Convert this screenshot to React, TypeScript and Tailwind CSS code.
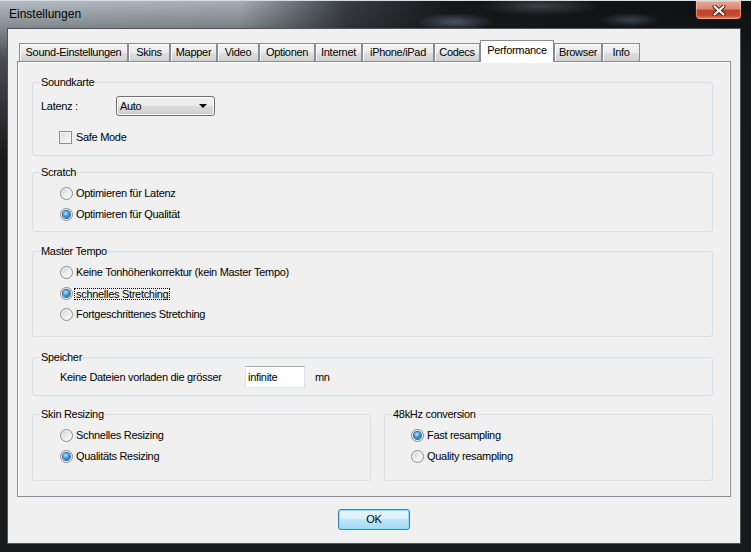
import React from "react";

const tabs = [
  { name: "Sound-Einstellungen", w: "w-[109px]" },
  { name: "Skins", w: "w-[42px]" },
  { name: "Mapper", w: "w-[47px]" },
  { name: "Video", w: "w-[42px]" },
  { name: "Optionen", w: "w-[56px]" },
  { name: "Internet", w: "w-[47px]" },
  { name: "iPhone/iPad", w: "w-[72px]" },
  { name: "Codecs", w: "w-[46px]" },
  { name: "Performance", w: "w-[74px]", active: true },
  { name: "Browser", w: "w-[48px]" },
  { name: "Info", w: "w-[38px]" },
];

function Radio({ checked }: { checked?: boolean }) {
  return (
    <span className="flex h-[13px] w-[13px] shrink-0 items-center justify-center rounded-full border border-[#8a8c8e] bg-[linear-gradient(135deg,#cfd0d1,#f6f6f6_70%)] shadow-[inset_0_0_0_1px_#f4f4f4]">
      {checked && (
        <span className="h-[7px] w-[7px] rounded-full bg-[radial-gradient(circle_at_40%_35%,#bfe6fb,#3b98dc_45%,#0b4c8e)] shadow-[0_0_0_1px_#2b6a9e]" />
      )}
    </span>
  );
}

function Option({ label, checked, focused }: { label: string; checked?: boolean; focused?: boolean }) {
  return (
    <div className="flex h-[21px] items-center gap-[3px]">
      <Radio checked={checked} />
      {focused ? (
        <span className="-ml-[2px] border border-dotted border-black px-[1px] leading-[10px]">{label}</span>
      ) : (
        <span>{label}</span>
      )}
    </div>
  );
}

function Group({ title, className, children }: { title: string; className: string; children: React.ReactNode }) {
  return (
    <fieldset className={`rounded-[3px] border border-[#d5dfe5] ${className}`}>
      <legend className="ml-[7px] px-[1px] leading-[13px]">{title}</legend>
      {children}
    </fieldset>
  );
}

export default function App() {
  return (
    <div className="flex h-[552px] w-[751px] flex-col overflow-hidden bg-[linear-gradient(to_bottom,transparent_0,rgba(24,26,29,0.7)_60px,#17191c_160px),radial-gradient(ellipse_38px_9px_at_455px_22px,rgba(150,170,200,0.55),transparent),radial-gradient(ellipse_30px_7px_at_630px_20px,rgba(120,150,190,0.45),transparent),radial-gradient(ellipse_60px_10px_at_540px_6px,rgba(200,205,215,0.25),transparent),linear-gradient(to_right,#b6bfc6_0%,#a7b0b7_32%,#3a3e43_46%,#141619_60%,#0e0f11_100%)] font-['Liberation_Sans',Arial,sans-serif] text-[11px] tracking-[-0.3px] text-black">
      {/* title bar */}
      <div className="flex h-[29px] shrink-0 items-start justify-between border-t border-[#d8dde2]">
        <div className="pl-[9px] pt-[6px] text-[12px] leading-[15px] tracking-normal text-black">Einstellungen</div>
        <div className="mr-[9px] flex h-[19px] w-[47px] items-center justify-center rounded-b-[5px] border border-t-0 border-[#3a0e08] bg-[linear-gradient(#eaa999,#d98672_45%,#c2412a_50%,#c64a31_80%,#e27e5d)] shadow-[inset_0_0_0_1px_rgba(255,220,210,0.45)]">
          <svg width="14" height="11" viewBox="0 0 14 11">
            <path d="M2.5 1.5 L11.5 9.5 M11.5 1.5 L2.5 9.5" stroke="#4a1a12" strokeWidth="4" strokeLinecap="round" />
            <path d="M2.5 1.5 L11.5 9.5 M11.5 1.5 L2.5 9.5" stroke="#ffffff" strokeWidth="2.2" strokeLinecap="round" />
          </svg>
        </div>
      </div>

      {/* client area */}
      <div className="mb-[9px] ml-[8px] mr-[11px] flex flex-1 flex-col bg-[#f0f0f0] pt-[11px] shadow-[0_0_0_1px_#4d5359]">
        {/* tab strip */}
        <div className="ml-[11px] flex h-[21px] items-end">
          {tabs.map((t) =>
            t.active ? (
              <div
                key={t.name}
                className={`relative z-10 -mb-px flex h-[22px] ${t.w} items-center justify-center border border-b-0 border-[#898c95] bg-white pb-[3px]`}
              >
                {t.name}
              </div>
            ) : (
              <div
                key={t.name}
                className={`flex h-[18px] ${t.w} items-center justify-center border border-b-0 border-[#898c95] bg-[linear-gradient(#f3f3f3,#ebebeb_50%,#dedede_50%,#d2d2d2)] shadow-[inset_1px_1px_0_#fbfbfb]`}
              >
                {t.name}
              </div>
            )
          )}
        </div>

        {/* tab panel */}
        <div className="ml-[9px] h-[436px] w-[714px] border border-[#898c95] bg-[#f0f0f0] px-[14px] pt-[14px] shadow-[inset_1px_1px_0_#fff,inset_-1px_0_0_#fff]">
          <Group title="Soundkarte" className="h-[80px] w-[681px]">
            <div className="flex items-center pl-[8px] pt-[7px]">
              <span className="w-[75px]">Latenz :</span>
              <div className="flex h-[20px] w-[99px] items-center justify-between rounded-[3px] border border-[#707070] bg-[linear-gradient(#f2f2f2,#ebebeb_50%,#dddddd_50%,#cfcfcf)] pl-[3px] pr-[7px] shadow-[inset_0_0_0_1px_#fafafa]">
                <span>Auto</span>
                <svg width="8" height="4" viewBox="0 0 8 4">
                  <path d="M0 0h8l-4 4z" fill="#000" />
                </svg>
              </div>
            </div>
            <div className="mt-[14px] flex h-[14px] items-center gap-[4px] pl-[26px]">
              <span className="h-[13px] w-[13px] shrink-0 border border-[#8e8f8f] bg-[linear-gradient(135deg,#dcdcdc,#fbfbfb)] shadow-[inset_0_0_0_1px_#f4f4f4]" />
              <span>Safe Mode</span>
            </div>
          </Group>

          <Group title="Scratch" className="mt-[10px] h-[66px] w-[681px]">
            <div className="pl-[27px] pt-[4px]">
              <Option label="Optimieren für Latenz" />
              <Option label="Optimieren für Qualität" checked />
            </div>
          </Group>

          <Group title="Master Tempo" className="mt-[13px] h-[92px] w-[681px]">
            <div className="pl-[27px] pt-[4px]">
              <Option label="Keine Tonhöhenkorrektur (kein Master Tempo)" />
              <Option label="schnelles Stretching" checked focused />
              <Option label="Fortgeschrittenes Stretching" />
            </div>
          </Group>

          <Group title="Speicher" className="mt-[14px] h-[45px] w-[681px]">
            <div className="flex items-center pl-[27px] pt-[2px]">
              <span className="w-[185px]">Keine Dateien vorladen die grösser</span>
              <div className="flex h-[22px] w-[60px] items-center border border-[#abadb3] border-b-[#e3e9ef] border-l-[#e2e3ea] border-r-[#dbdfe6] bg-white pl-[2px]">
                infinite
              </div>
              <span className="ml-[10px]">mn</span>
            </div>
          </Group>

          <div className="mt-[12px] flex gap-[13px]">
            <Group title="Skin Resizing" className="h-[73px] w-[339px]">
              <div className="pl-[27px] pt-[4px]">
                <Option label="Schnelles Resizing" />
                <Option label="Qualitäts Resizing" checked />
              </div>
            </Group>
            <Group title="48kHz conversion" className="h-[73px] w-[329px]">
              <div className="pl-[26px] pt-[4px]">
                <Option label="Fast resampling" checked />
                <Option label="Quality resampling" />
              </div>
            </Group>
          </div>
        </div>

        {/* buttons */}
        <div className="mt-[12px] flex justify-center">
          <button className="h-[21px] w-[72px] rounded-[3px] border border-[#3c7fb1] bg-[linear-gradient(#eaf6fd,#d9f0fc_50%,#bee6fd_50%,#a7d9f5)] text-black shadow-[inset_0_0_0_1px_#8fe0ff]">
            OK
          </button>
        </div>
      </div>
    </div>
  );
}
